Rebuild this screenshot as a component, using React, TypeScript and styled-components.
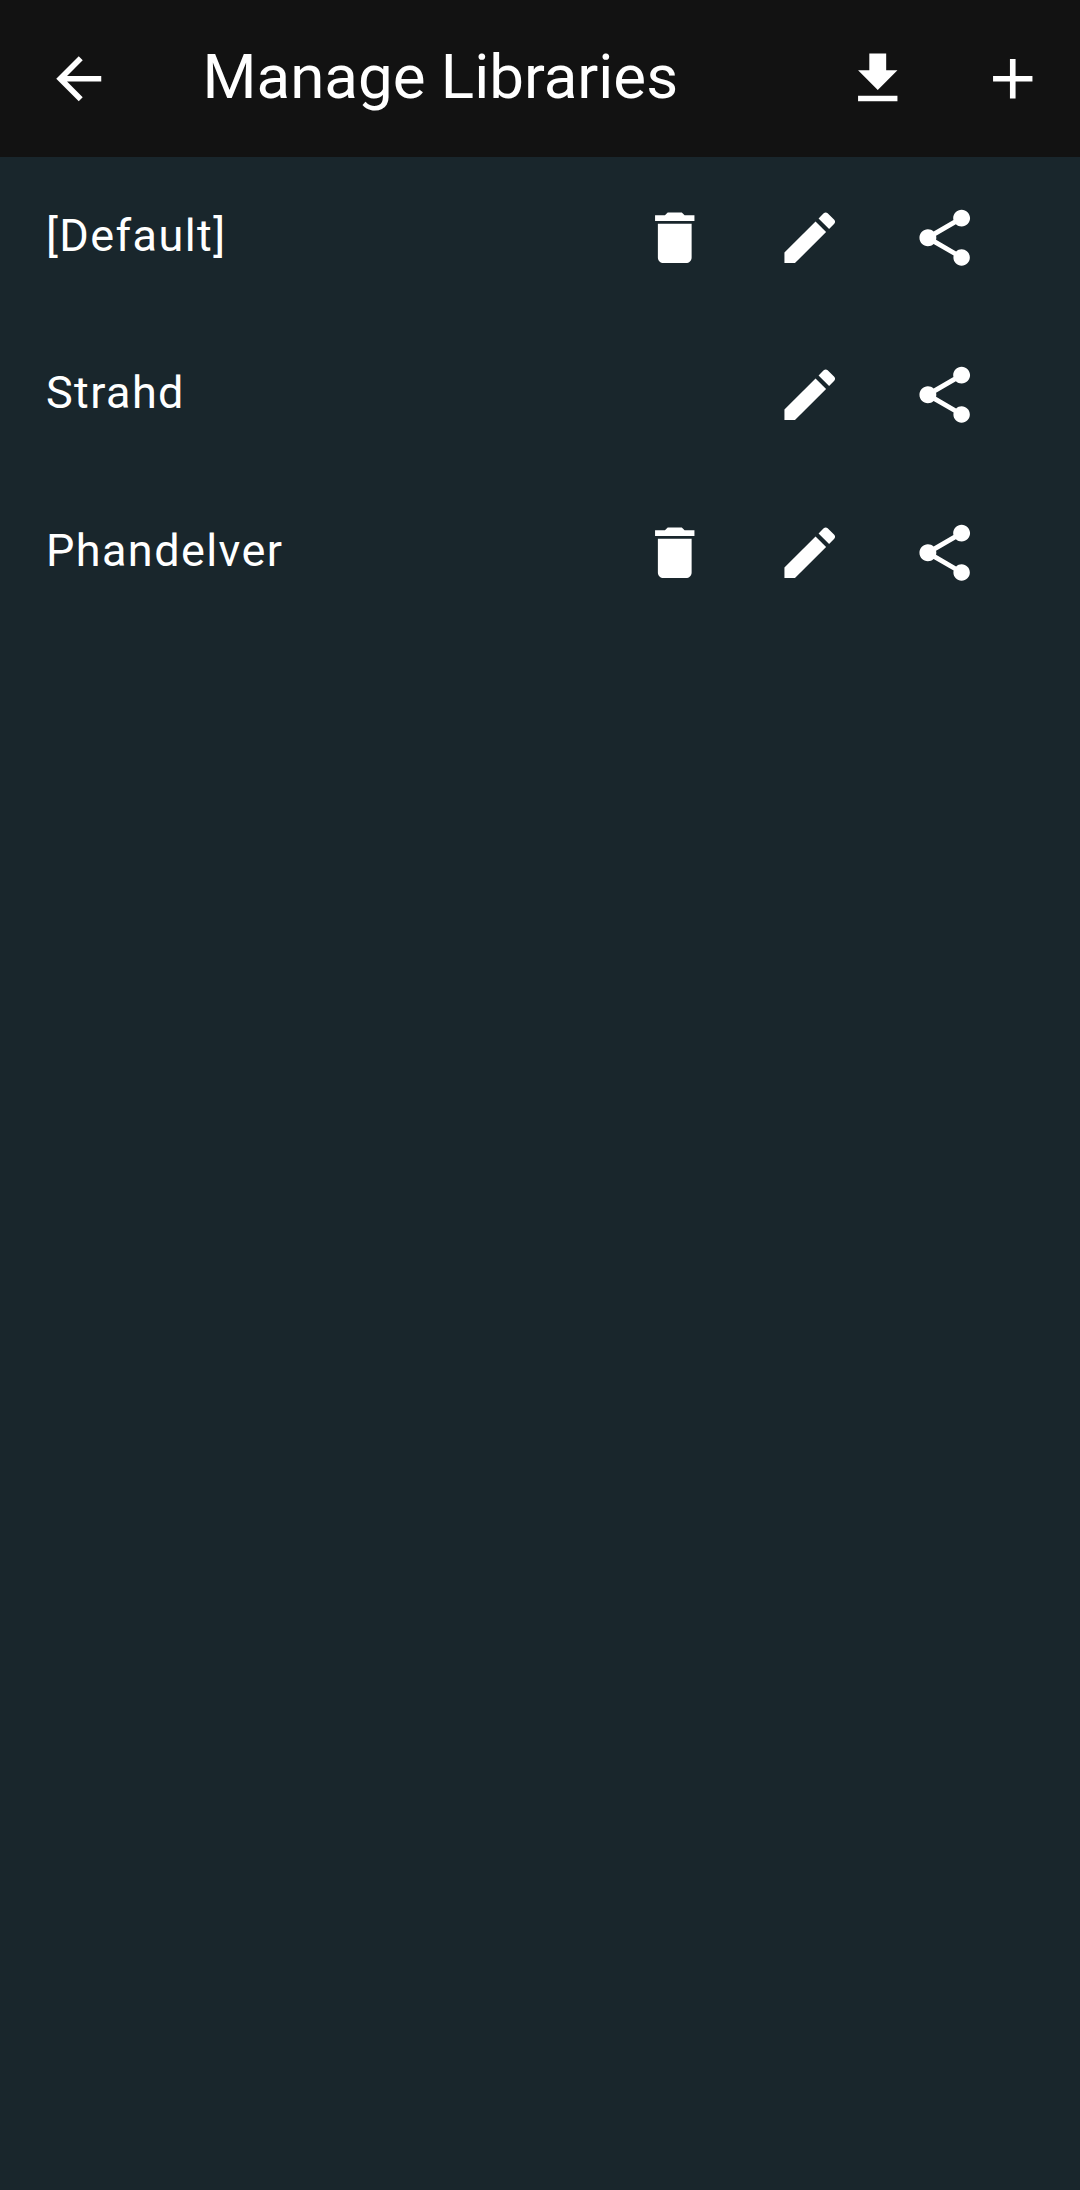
import React from "react";
import styled, { createGlobalStyle } from "styled-components";

const GlobalStyle = createGlobalStyle`
    html, body {
        margin: 0;
        padding: 0;
        background: #19262c;
    }
`;

const Page = styled.div`
    width: 1080px;
    height: 2190px;
    display: flex;
    flex-direction: column;
    background: #19262c;
    font-family: Roboto, "Noto Sans", sans-serif;
    color: #ffffff;
    overflow: hidden;
`;

const Toolbar = styled.header`
    height: 157px;
    flex: none;
    display: flex;
    align-items: center;
    background: #121212;
`;

const BackSlot = styled.div`
    width: 157.5px;
    display: flex;
    justify-content: center;
    flex: none;
`;

const Title = styled.h1`
    flex: 1;
    margin: 0 0 3px 45px;
    font-size: 61.875px;
    line-height: 72px;
    font-weight: 400;
`;

const ToolbarActions = styled.div`
    display: flex;
`;

const ToolbarSlot = styled.div`
    width: 135px;
    display: flex;
    justify-content: center;
`;

const List = styled.main`
    display: flex;
    flex-direction: column;
`;

const Row = styled.div`
    height: 157.5px;
    display: flex;
    align-items: center;
    padding: 0 67.5px 0 46px;
`;

const Name = styled.span`
    flex: 1;
    font-size: 45px;
    line-height: 60px;
    letter-spacing: 1.406px;
    font-weight: 400;
`;

const IconSlot = styled.div<{ $hidden?: boolean }>`
    width: 135px;
    padding-top: 3px;
    display: flex;
    justify-content: center;
    visibility: ${(p) => (p.$hidden ? "hidden" : "visible")};
`;

const Glyph = styled.svg`
    width: 67.5px;
    height: 67.5px;
    fill: #ffffff;
    display: block;
`;

const Icon = ({ d }: { d: string }) => (
    <Glyph viewBox="0 0 24 24">
        <path d={d} />
    </Glyph>
);

const BACK = "M20 11H7.83l5.59-5.59L12 4l-8 8 8 8 1.41-1.41L7.83 13H20v-2z";
const DOWNLOAD = "M19 9h-4V3H9v6H5l7 7 7-7zM5 18v2h14v-2H5z";
const ADD = "M19 13h-6v6h-2v-6H5v-2h6V5h2v6h6v2z";
const DELETE = "M6 19c0 1.1.9 2 2 2h8c1.1 0 2-.9 2-2V7H6v12zM19 4h-3.5l-1-1h-5l-1 1H5v2h14V4z";
const EDIT = "M3 17.25V21h3.75L17.81 9.94l-3.75-3.75L3 17.25zM20.71 7.04c.39-.39.39-1.02 0-1.41l-2.34-2.34c-.39-.39-1.02-.39-1.41 0l-1.83 1.83 3.75 3.75 1.83-1.83z";
const SHARE = "M18 16.08c-.76 0-1.44.3-1.96.77L8.91 12.7c.05-.23.09-.46.09-.7s-.04-.47-.09-.7l7.05-4.11c.54.5 1.25.81 2.04.81 1.66 0 3-1.34 3-3s-1.34-3-3-3-3 1.34-3 3c0 .24.04.47.09.7L8.04 9.81C7.5 9.31 6.79 9 6 9c-1.66 0-3 1.34-3 3s1.34 3 3 3c.79 0 1.5-.31 2.04-.81l7.12 4.16c-.05.21-.08.43-.08.65 0 1.61 1.31 2.92 2.92 2.92s2.92-1.31 2.92-2.92-1.31-2.92-2.92-2.92z";

const libraries = [
    { name: "[Default]", deletable: true },
    { name: "Strahd", deletable: false },
    { name: "Phandelver", deletable: true },
];

export default function App() {
    return (
        <Page>
            <GlobalStyle />
            <Toolbar>
                <BackSlot>
                    <Icon d={BACK} />
                </BackSlot>
                <Title>Manage Libraries</Title>
                <ToolbarActions>
                    <ToolbarSlot>
                        <Icon d={DOWNLOAD} />
                    </ToolbarSlot>
                    <ToolbarSlot>
                        <Icon d={ADD} />
                    </ToolbarSlot>
                </ToolbarActions>
            </Toolbar>
            <List>
                {libraries.map((lib) => (
                    <Row key={lib.name}>
                        <Name>{lib.name}</Name>
                        <IconSlot $hidden={!lib.deletable}>
                            <Icon d={DELETE} />
                        </IconSlot>
                        <IconSlot>
                            <Icon d={EDIT} />
                        </IconSlot>
                        <IconSlot>
                            <Icon d={SHARE} />
                        </IconSlot>
                    </Row>
                ))}
            </List>
        </Page>
    );
}
